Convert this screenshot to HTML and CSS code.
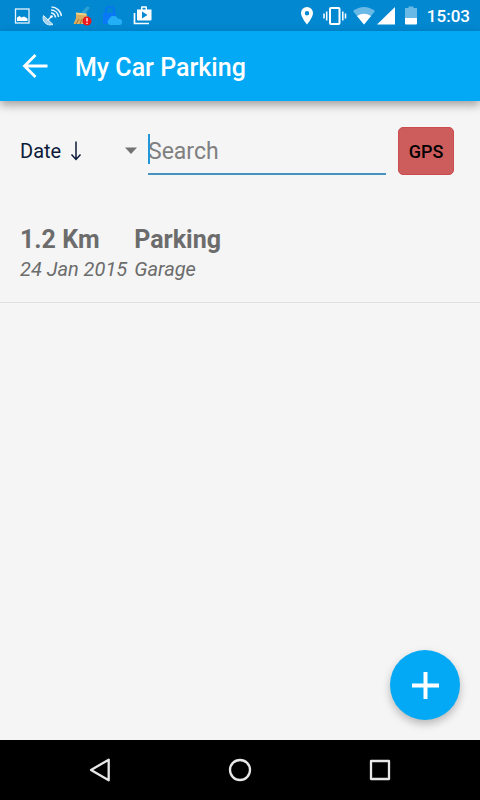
FILE: index.html
```html
<!DOCTYPE html>
<html lang="en">
<head>
<meta charset="utf-8">
<meta name="viewport" content="width=device-width, initial-scale=1">
<title>My Car Parking</title>
<link rel="stylesheet" href="styles.css">
</head>
<body>
<div class="status">
  <div class="status-group notifications">
    <svg width="20" height="20" viewBox="0 0 20 20"><rect x="3.500" y="3" width="13.500" height="14" fill="none" stroke="#e6f3fb" stroke-width="1.300"/><path d="M5 15v-3.500l2.500-1.500 2 1.500 2.500-1 3.500 2V15z" fill="#fff"/></svg>
    <svg width="20" height="20" viewBox="0 0 20 20"><path d="M1.500 9.500C-.5 15 4.500 20.500 11 18.500z" fill="#9fd0ee" stroke="#e2f2fb"/><path d="M5.500 14.500l4-4" stroke="#e2f2fb" stroke-width="1.500"/><circle cx="9.500" cy="10.500" r="1.300" fill="#fff"/><path d="M9 7c2.500 0 4 1.500 4.500 4.500M9 4c4 0 7 3 7.500 7M9.500 1c5 0 9 4 10 9" fill="none" stroke="#e2f2fb" stroke-width="1.600"/></svg>
    <svg width="20" height="20" viewBox="0 0 20 20"><path d="M9 7l2-2.500L15 .5l3 1L14.500 6v3z" fill="#2da0d6"/><path d="M4 7.500l10 1 2 3-1 6.500H1.500L4 12z" fill="#d9ae62"/><path d="M4 6.500l10 1 1 2-11-1z" fill="#f1d184"/><path d="M4 18l3-5M8 18l2-5" stroke="#a87937"/><circle cx="15" cy="15" r="4.500" fill="#ed171c"/><path d="M15 12v3.500M15 16.800v1.200" stroke="#fff" stroke-width="1.300"/></svg>
    <svg width="20" height="20" viewBox="0 0 20 20"><path d="M4 8V4.500a4 4 0 018 0V8" fill="none" stroke="#0676ef" stroke-width="2"/><rect x="1" y="7" width="13" height="11" rx="1" fill="#0878f6"/><path d="M8 19a3.300 3.300 0 01-.5-6.200A4.500 4.500 0 0116 13a3 3 0 012 6z" fill="#24aef5"/></svg>
    <svg width="20" height="20" viewBox="0 0 20 20"><path d="M2.500 7v10.500H17" fill="none" stroke="#fff" stroke-width="1.700"/><path fill-rule="evenodd" d="M5 3.500h4V1Q9 .2 10 .2h4q1 0 1 .8v2.500h4.500v10q0 1-1 1H6q-1 0-1-1zM10.500 1.700v1.800h3V1.700zM10 5.500v7L15.500 9z" fill="#fff"/></svg>
  </div>
  <div class="status-group system">
    <svg width="20" height="20" viewBox="0 0 20 20"><path fill-rule="evenodd" d="M10 1a6 6 0 00-6 6c0 4.500 6 11.500 6 11.500S16 11.500 16 7a6 6 0 00-6-6zm0 4a2.200 2.200 0 110 4.400A2.200 2.200 0 0110 5z" fill="#fff"/></svg>
    <svg width="24" height="20" viewBox="0 0 24 20"><rect x="7" y="2" width="9.500" height="16" rx="1" fill="none" stroke="#fff" stroke-width="2"/><path d="M1 7.500v5M3.700 5.500v9M19.800 5.500v9M22.500 7.500v5" stroke="#fff" stroke-width="1.500"/></svg>
    <svg width="42" height="20" viewBox="0 0 42 20"><path d="M0 5Q11-3 22 5L11 18.500z" fill="#69b9e6"/><path d="M4 10q7-4.500 14 0l-7 8.500z" fill="#fff"/><path d="M42 1v17.500H24z" fill="#fff"/></svg>
    <svg width="20" height="20" viewBox="0 0 20 20"><path d="M4 2h3.500V.5h5V2H16v10H4z" fill="#69b9e6"/><path d="M4 12h12v5.500q0 1-1 1H5q-1 0-1-1z" fill="#fff"/></svg>
    <time class="clock">15:03</time>
  </div>
</div>
<header class="appbar">
  <button class="icon-button" type="button" aria-label="Back"><svg width="30" height="30" viewBox="0 0 30 30"><path d="M27.500 15H5M15.500 4L4.500 15l11 11" fill="none" stroke="#fff" stroke-width="2.800"/></svg></button>
  <h1 class="title">My Car Parking</h1>
</header>
<main class="content">
  <form class="filters">
    <div class="sort">
      <select class="sort-select" aria-label="Sort by"><option>Date</option></select>
      <svg class="sort-direction" width="12" height="20" viewBox="0 0 12 20"><path d="M6 .5v18M1.500 13.500L6 18.500l4.500-5" fill="none" stroke="#0d1b3a" stroke-width="1.500"/></svg>
      <svg class="sort-arrow" width="14" height="8" viewBox="0 0 14 8"><path d="M1 .5h12L7 7z" fill="#737373"/></svg>
    </div>
    <div class="search">
      <input class="search-input" type="text" placeholder="Search" aria-label="Search">
      <span class="caret"></span>
    </div>
    <button class="gps" type="button">GPS</button>
  </form>
  <ul class="list">
    <li class="item">
      <div class="col"><strong class="main-text">1.2 Km</strong><em class="sub-text">24 Jan 2015</em></div>
      <div class="col"><strong class="main-text">Parking</strong><em class="sub-text">Garage</em></div>
    </li>
  </ul>
  <button class="fab" type="button" aria-label="Add"><svg width="30" height="30" viewBox="0 0 30 30"><path d="M15.500 2v27M2 15.500h27" stroke="#fff" stroke-width="4"/></svg></button>
</main>
<nav class="navbar">
  <button class="nav-button" type="button" aria-label="Back"><svg width="28" height="28" viewBox="0 0 28 28"><path d="M22.700 3.700v20.600L5 14z" fill="none" stroke="#e8e8e8" stroke-width="2.300" stroke-linejoin="round"/></svg></button>
  <button class="nav-button" type="button" aria-label="Home"><svg width="28" height="28" viewBox="0 0 28 28"><circle cx="14" cy="14" r="10" fill="none" stroke="#e8e8e8" stroke-width="2.300"/></svg></button>
  <button class="nav-button" type="button" aria-label="Recent apps"><svg width="28" height="28" viewBox="0 0 28 28"><rect x="5" y="5" width="18" height="18" fill="none" stroke="#e8e8e8" stroke-width="2.300" stroke-linejoin="round"/></svg></button>
</nav>
</body>
</html>
```

FILE: styles.css
```css
* {
  box-sizing: border-box;
}

body {
  margin: 0;
  min-height: 100vh;
  display: flex;
  flex-direction: column;
  background: #f5f5f5;
  font-family: Roboto, "Noto Sans", sans-serif;
}

svg {
  display: block;
}

button {
  border: 0;
  padding: 0;
  background: none;
  font-family: inherit;
}

.status {
  display: flex;
  justify-content: space-between;
  align-items: center;
  height: 31px;
  padding: 0 10px 0 12px;
  background: #0288d1;
}

.status-group {
  display: flex;
  align-items: center;
}

.notifications {
  gap: 10px;
}

.system {
  gap: 6px;
}

.clock {
  padding-top: 1px;
  color: #fff;
  font-size: 17px;
  font-weight: 500;
  line-height: 24px;
}

.appbar {
  position: relative;
  display: flex;
  align-items: center;
  gap: 25px;
  height: 70px;
  padding: 0 20px;
  background: #03a9f4;
  box-shadow: 0 4px 9px rgba(0, 0, 0, 0.35);
}

.title {
  margin: 0;
  padding-top: 4px;
  color: #fff;
  font-size: 25px;
  font-weight: 500;
  line-height: 32px;
}

.content {
  position: relative;
  flex: 1;
  padding-top: 26px;
}

.filters {
  display: flex;
  align-items: center;
  padding: 0 26px 0 20px;
}

.sort {
  position: relative;
  width: 128px;
}

.sort-select {
  display: block;
  width: 100%;
  height: 48px;
  padding: 0;
  border: 0;
  appearance: none;
  background: none;
  color: #0d1b3a;
  font-family: inherit;
  font-size: 20px;
}

.sort-direction {
  position: absolute;
  top: 14px;
  left: 50px;
  pointer-events: none;
}

.sort-arrow {
  position: absolute;
  top: 20px;
  right: 10px;
  pointer-events: none;
}

.search {
  position: relative;
  flex: 1;
  margin-right: 12px;
}

.search-input {
  display: block;
  width: 100%;
  height: 48px;
  padding: 2px 0 0;
  border: 0;
  border-bottom: 2px solid #4793c0;
  background: none;
  color: #222;
  font-family: inherit;
  font-size: 23px;
  outline: 0;
}

.search-input::placeholder {
  color: #808080;
  opacity: 1;
}

.caret {
  position: absolute;
  top: 7px;
  left: 0;
  width: 2px;
  height: 30px;
  background: #2196d8;
}

.gps {
  width: 56px;
  height: 48px;
  border: 1px solid #cb4d4f;
  border-radius: 5px;
  background: #cd5c5c;
  color: #000;
  font-size: 18px;
  font-weight: 500;
}

.list {
  margin: 0;
  padding: 0;
  list-style: none;
}

.item {
  display: flex;
  gap: 7px;
  padding: 49px 20px 20px;
  border-bottom: 1px solid #dfdfdf;
  color: #6c6c6c;
}

.col {
  display: flex;
  flex-direction: column;
}

.main-text {
  font-size: 25px;
  font-weight: 700;
  line-height: 32px;
}

.sub-text {
  font-size: 20px;
  line-height: 26px;
}

.fab {
  position: absolute;
  right: 20px;
  bottom: 20px;
  display: grid;
  place-items: center;
  width: 70px;
  height: 70px;
  border-radius: 50%;
  background: #03a9f4;
  box-shadow: 0 4px 8px rgba(0, 0, 0, 0.25);
}

.navbar {
  display: flex;
  justify-content: center;
  align-items: center;
  gap: 112px;
  height: 60px;
  background: #000;
}
```
